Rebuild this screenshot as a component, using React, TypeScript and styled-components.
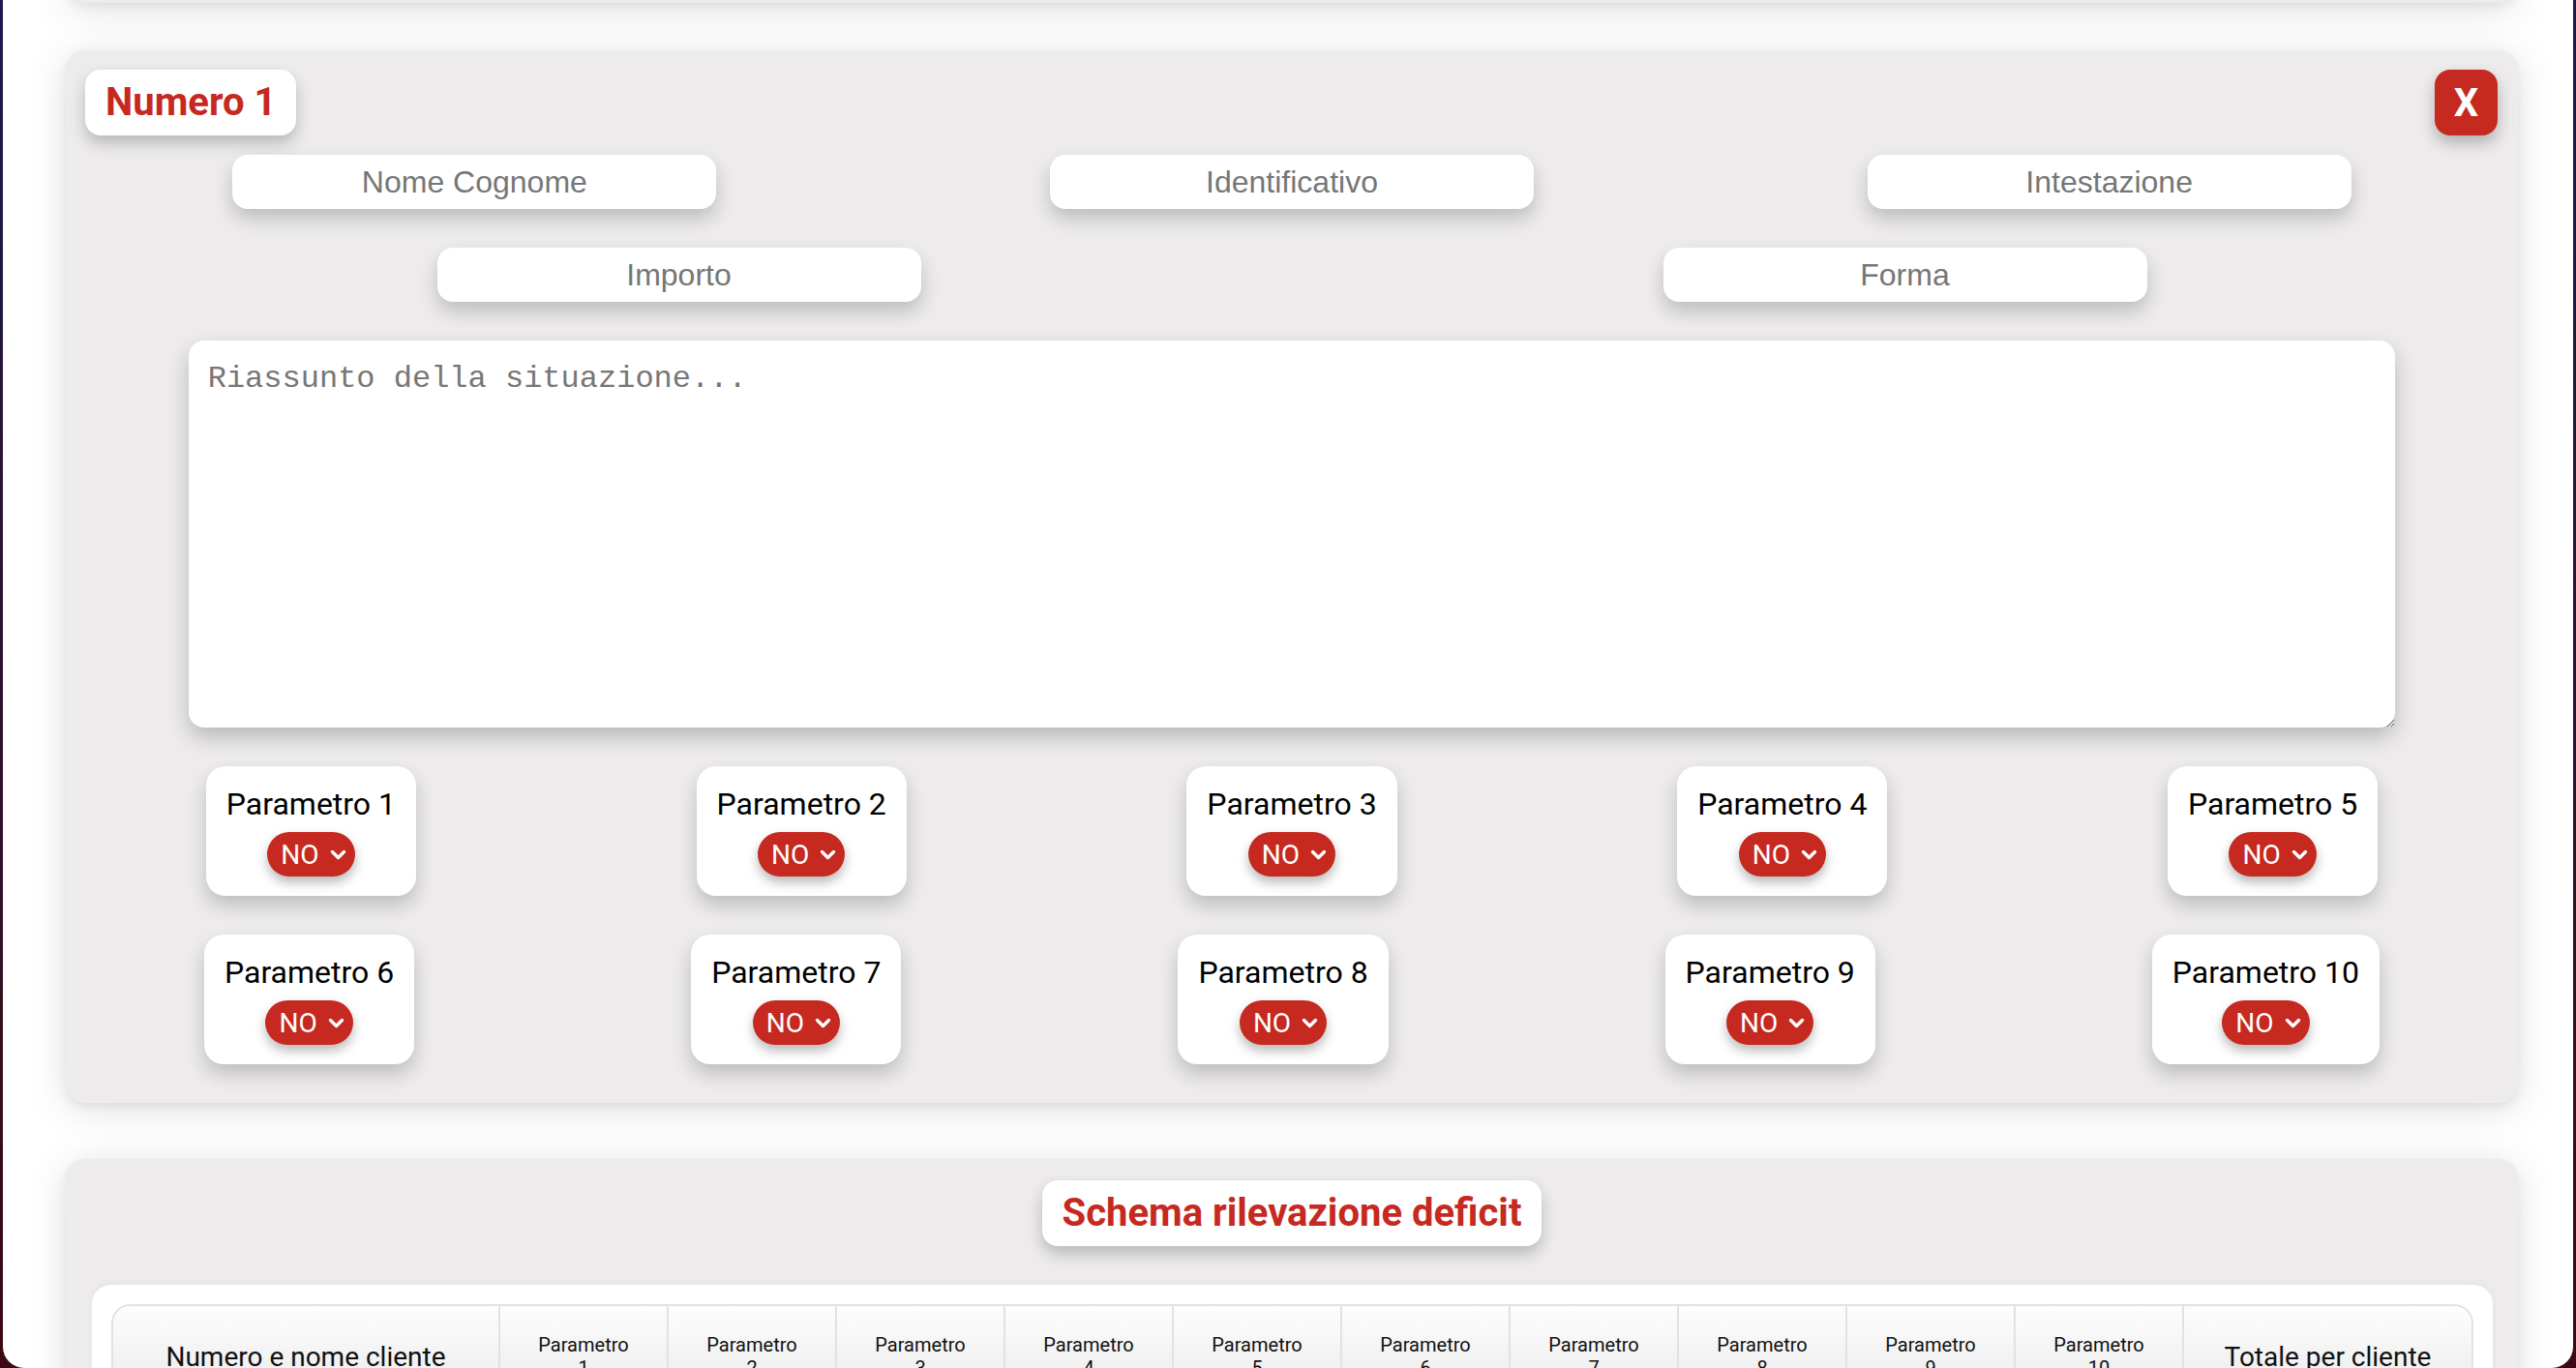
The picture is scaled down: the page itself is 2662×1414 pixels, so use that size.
import styled, { createGlobalStyle } from 'styled-components'

const colors = {
	red: '#c5291f',
	card: '#edebec',
	white: '#ffffff',
	placeholder: '#767676',
	border: '#e2e2e2',
}

const GlobalStyle = createGlobalStyle`
	html, body {
		margin: 0;
		height: 100%;
	}
	body {
		overflow: hidden;
		background: linear-gradient(to bottom, #1d1b4c, #3b0a12);
		font-family: Roboto, "Liberation Sans", sans-serif;
	}
`

const Frame = styled.div`
	height: 100vh;
	margin: 0 3px;
	background-color: ${colors.white};
	border-radius: 0 0 22px 22px;
	overflow: hidden;
`

const Page = styled.main`
	display: flex;
	flex-direction: column;
	padding: 0 57px 0 65px;
`

const Card = styled.section<{ $top: number }>`
	display: flex;
	flex-direction: column;
	margin-top: ${(p) => p.$top}px;
	background-color: ${colors.card};
	border-radius: 20px;
	box-shadow: 0 6px 40px rgba(0, 0, 0, 0.13), 0 4px 10px rgba(0, 0, 0, 0.06);
`

const StubCard = styled(Card)`
	height: 40px;
`

const CardHeader = styled.div`
	display: flex;
	justify-content: space-between;
	align-items: flex-start;
	padding: 20px 21px 0 20px;
`

const TitleBadge = styled.h2`
	margin: 0;
	padding: 10px 21px;
	line-height: 48px;
	font-size: 40px;
	font-weight: 700;
	color: ${colors.red};
	background-color: ${colors.white};
	border-radius: 16px;
	box-shadow: 0 8px 16px rgba(0, 0, 0, 0.22);
`

const CloseButton = styled.button`
	width: 65px;
	height: 68px;
	padding: 0;
	border: none;
	border-radius: 16px;
	background-color: ${colors.red};
	color: ${colors.white};
	font-family: Roboto, sans-serif;
	font-size: 40px;
	font-weight: 700;
	box-shadow: 0 8px 16px rgba(0, 0, 0, 0.25);
	cursor: pointer;
`

const FieldRow = styled.div<{ $top: number }>`
	display: flex;
	justify-content: space-around;
	margin-top: ${(p) => p.$top}px;
`

const Field = styled.input`
	box-sizing: border-box;
	width: 500px;
	height: 56px;
	padding: 0 10px;
	border: none;
	border-radius: 16px;
	background-color: ${colors.white};
	text-align: center;
	font-family: "Liberation Sans", Arial, sans-serif;
	font-size: 32px;
	color: #333;
	outline: none;
	box-shadow: 0 10px 20px rgba(0, 0, 0, 0.2);

	&::placeholder {
		color: ${colors.placeholder};
	}
`

const Summary = styled.textarea`
	box-sizing: border-box;
	align-self: center;
	width: 90%;
	height: 400px;
	margin-top: 40px;
	padding: 21px 20px 20px;
	border: none;
	border-radius: 16px;
	background-color: ${colors.white};
	font-family: "Liberation Mono", "Courier New", monospace;
	font-size: 32px;
	color: #333;
	outline: none;
	box-shadow: 0 10px 22px rgba(0, 0, 0, 0.22);

	&::placeholder {
		color: ${colors.placeholder};
	}
`

const ParamRow = styled.div<{ $last?: boolean }>`
	display: flex;
	justify-content: space-around;
	margin-top: 40px;
	margin-bottom: ${(p) => (p.$last ? 40 : 0)}px;
`

const ParamCard = styled.div`
	display: flex;
	flex-direction: column;
	align-items: center;
	gap: 10px;
	padding: 20px 21px;
	background-color: ${colors.white};
	border-radius: 20px;
	box-shadow: 0 10px 20px rgba(0, 0, 0, 0.2);
`

const ParamLabel = styled.span`
	font-size: 32px;
	color: #000;
	white-space: nowrap;
`

const Toggle = styled.div`
	display: inline-flex;
	align-items: center;
	gap: 11px;
	height: 46px;
	padding: 0 9px 0 14px;
	border-radius: 23px;
	background-color: ${colors.red};
	color: ${colors.white};
	font-size: 28px;
	box-shadow: 0 6px 12px rgba(0, 0, 0, 0.28);
	cursor: pointer;
`

const SchemaHeader = styled.div`
	display: flex;
	justify-content: center;
	padding-top: 22px;
`

const TableWrap = styled.div`
	margin: 40px 26px 0 27px;
	padding: 20px;
	background-color: ${colors.white};
	border-radius: 20px 20px 0 0;
	box-shadow: 0 -2px 10px rgba(0, 0, 0, 0.04);
`

const Table = styled.table`
	width: 100%;
	border-collapse: separate;
	border-spacing: 0;
	border: 2px solid ${colors.border};
	border-radius: 20px;
	overflow: hidden;
	table-layout: fixed;
`

const HeadCell = styled.th<{ $small?: boolean }>`
	padding: 28px 10px;
	background: linear-gradient(to bottom, #fdfdfd, #e9e9e9);
	border-left: 2px solid ${colors.border};
	font-size: ${(p) => (p.$small ? 20 : 28)}px;
	font-weight: 400;
	color: #111;
	text-align: center;
	vertical-align: middle;

	&:first-child {
		border-left: none;
	}
`

function Chevron() {
	return (
		<svg width="17" height="11" viewBox="0 0 17 11" fill="none">
			<polyline points="2.5,2.5 8.5,8.5 14.5,2.5" stroke="#fff" strokeWidth="3.4" strokeLinecap="round" strokeLinejoin="round" />
		</svg>
	)
}

function Parameter({ n }: { n: number }) {
	return (
		<ParamCard>
			<ParamLabel>Parametro {n}</ParamLabel>
			<Toggle>
				NO
				<Chevron />
			</Toggle>
		</ParamCard>
	)
}

const params = [1, 2, 3, 4, 5, 6, 7, 8, 9, 10]

function App() {
	return (
		<>
			<GlobalStyle />
			<Frame>
				<Page>
					<StubCard $top={-37} />

					<Card $top={49}>
						<CardHeader>
							<TitleBadge>Numero 1</TitleBadge>
							<CloseButton>X</CloseButton>
						</CardHeader>
						<FieldRow $top={20}>
							<Field placeholder="Nome Cognome" />
							<Field placeholder="Identificativo" />
							<Field placeholder="Intestazione" />
						</FieldRow>
						<FieldRow $top={40}>
							<Field placeholder="Importo" />
							<Field placeholder="Forma" />
						</FieldRow>
						<Summary placeholder="Riassunto della situazione..." />
						<ParamRow>
							{params.slice(0, 5).map((n) => (
								<Parameter key={n} n={n} />
							))}
						</ParamRow>
						<ParamRow $last>
							{params.slice(5).map((n) => (
								<Parameter key={n} n={n} />
							))}
						</ParamRow>
					</Card>

					<Card $top={58}>
						<SchemaHeader>
							<TitleBadge>Schema rilevazione deficit</TitleBadge>
						</SchemaHeader>
						<TableWrap>
							<Table>
								<colgroup>
									<col style={{ width: 398 }} />
									{params.map((n) => (
										<col key={n} style={{ width: 174 }} />
									))}
									<col />
								</colgroup>
								<thead>
									<tr>
										<HeadCell>Numero e nome cliente</HeadCell>
										{params.map((n) => (
											<HeadCell key={n} $small>
												Parametro
												<br />
												{n}
											</HeadCell>
										))}
										<HeadCell>Totale per cliente</HeadCell>
									</tr>
								</thead>
							</Table>
						</TableWrap>
					</Card>
				</Page>
			</Frame>
		</>
	)
}

export default App
